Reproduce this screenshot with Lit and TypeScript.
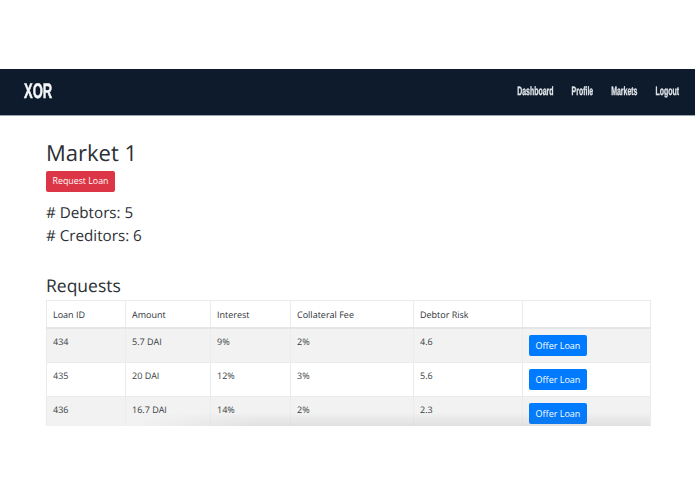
import { LitElement, html, css } from 'lit';
import { customElement } from 'lit/decorators.js';

const requests = [
    { id: '434', amount: '5.7 DAI', interest: '9%', fee: '2%', risk: '4.6' },
    { id: '435', amount: '20 DAI', interest: '12%', fee: '3%', risk: '5.6' },
    { id: '436', amount: '16.7 DAI', interest: '14%', fee: '2%', risk: '2.3' },
];

const links = ['Dashboard', 'Profile', 'Markets', 'Logout'];

@customElement('app-root')
export class AppRoot extends LitElement {
    static styles = css`
        :host {
            display: block;
            height: 494px;
            padding-top: 69px;
            box-sizing: border-box;
            overflow: hidden;
            background: #fff;
            color: #2b3035;
            font-family: 'Open Sans', sans-serif;
            text-rendering: geometricPrecision;
        }

        .nav {
            height: 47px;
            box-sizing: border-box;
            display: flex;
            align-items: center;
            justify-content: space-between;
            padding: 0 16px 0 24px;
            background: #0d1b2c;
            border-bottom: 1px solid #9aa5ad;
            font-family: 'Liberation Sans', sans-serif;
            font-weight: 700;
            color: #f4f6f8;
        }

        .brand {
            font-size: 21px;
            -webkit-text-stroke: 0.5px #f4f6f8;
            transform: scaleX(0.62);
            transform-origin: left center;
        }

        .links {
            display: flex;
            gap: 31px;
            margin-bottom: 2px;
            font-size: 12px;
            -webkit-text-stroke: 0.3px #dfe4e8;
            color: #dfe4e8;
            transform: scaleX(0.58);
            transform-origin: right center;
        }

        .main {
            padding: 23px 44px 0 46px;
        }

        h1 {
            margin: 0;
            font-size: 22px;
            font-weight: 400;
            line-height: 28px;
        }

        .request {
            display: block;
            margin-top: 4px;
            height: 21px;
            width: 69px;
            padding: 0;
            box-sizing: border-box;
            border: none;
            border-radius: 2px;
            background: #dc3545;
            color: #fff;
            font: 400 8.8px/21px 'Open Sans', sans-serif;
        }

        .stats {
            margin-top: 10px;
            font-size: 15.2px;
            line-height: 23px;
        }

        h2 {
            margin: 25px 0 0;
            font-size: 17.5px;
            font-weight: 400;
            line-height: 26px;
        }

        .table-wrap {
            position: relative;
            height: 126px;
            margin-top: 1px;
            overflow: hidden;
        }

        .fade {
            position: absolute;
            left: 90px;
            right: 1px;
            bottom: 0;
            height: 14px;
            background: linear-gradient(rgba(120, 120, 120, 0), rgba(120, 120, 120, 0.14));
            -webkit-mask-image: linear-gradient(90deg, transparent, #000 120px);
            mask-image: linear-gradient(90deg, transparent, #000 120px);
        }

        table {
            width: 604px;
            table-layout: fixed;
            border-collapse: collapse;
            font-size: 9px;
            color: #3a3f44;
        }

        th,
        td {
            border: 1px solid #e9ecef;
            padding: 0 0 0 6px;
            text-align: left;
            font-weight: 400;
        }

        th {
            height: 26px;
            color: #2f3438;
        }

        thead tr {
            border-bottom: 2px solid #e3e6e9;
        }

        td {
            height: 34px;
            vertical-align: top;
            padding-top: 6px;
            box-sizing: border-box;
        }

        tbody tr:nth-child(odd) {
            background: #f2f2f2;
        }

        .offer {
            display: block;
            height: 21px;
            width: 58px;
            padding: 0;
            border: none;
            border-radius: 2px;
            background: #007bff;
            color: #fff;
            font: 400 9px/21px 'Open Sans', sans-serif;
        }
    `;

    override render() {
        return html`
            <div class="nav">
                <div class="brand">XOR</div>
                <div class="links">${links.map((link) => html`<span>${link}</span>`)}</div>
            </div>
            <div class="main">
                <h1>Market 1</h1>
                <button class="request">Request Loan</button>
                <div class="stats">
                    <div># Debtors: 5</div>
                    <div># Creditors: 6</div>
                </div>
                <h2>Requests</h2>
                <div class="table-wrap">
                    <table>
                        <colgroup>
                            <col style="width: 79px" />
                            <col style="width: 85px" />
                            <col style="width: 80px" />
                            <col style="width: 123px" />
                            <col style="width: 109px" />
                            <col style="width: 128px" />
                        </colgroup>
                        <thead>
                            <tr>
                                <th>Loan ID</th>
                                <th>Amount</th>
                                <th>Interest</th>
                                <th>Collateral Fee</th>
                                <th>Debtor Risk</th>
                                <th></th>
                            </tr>
                        </thead>
                        <tbody>
                            ${requests.map(
                                (r) => html`<tr>
                                    <td>${r.id}</td>
                                    <td>${r.amount}</td>
                                    <td>${r.interest}</td>
                                    <td>${r.fee}</td>
                                    <td>${r.risk}</td>
                                    <td><button class="offer">Offer Loan</button></td>
                                </tr>`
                            )}
                        </tbody>
                    </table>
                    <div class="fade"></div>
                </div>
            </div>
        `;
    }
}
